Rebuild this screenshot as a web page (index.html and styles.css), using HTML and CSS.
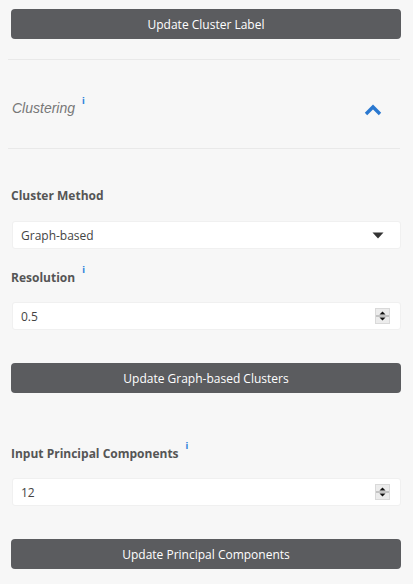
FILE: index.html
```html
<!DOCTYPE html>
<html>
<head>
<meta name="viewport" content="width=device-width, initial-scale=1">
<link rel="stylesheet" href="styles.css">
</head>
<body>

<div class="panel">

  <button class="btn btn-first">Update Cluster Label</button>

  <hr class="rule rule-top">

  <div class="section-head">
    <span class="section-title">Clustering<sup class="info">i</sup></span>
    <svg class="chevron" width="18" height="12" viewBox="0 0 18 12">
      <path d="M2 10 L9 3 L16 10" fill="none" stroke="#2a78d0" stroke-width="3.4"/>
    </svg>
  </div>

  <hr class="rule">

  <label class="field-label first-label">Cluster Method</label>
  <div class="box">
    <span>Graph-based</span>
    <svg class="caret" width="12" height="7" viewBox="0 0 12 7">
      <path d="M0.5 0.5 L11.5 0.5 L6 6.5 Z" fill="#333"/>
    </svg>
  </div>

  <label class="field-label">Resolution<sup class="info">i</sup></label>
  <div class="box">
    <span>0.5</span>
    <svg class="spin" width="15" height="16" viewBox="0 0 15 16">
      <rect x="0" y="0" width="15" height="16" fill="#d9d9d9"/>
      <rect x="1" y="1" width="13" height="14" fill="#ececec"/>
      <line x1="1" y1="8" x2="14" y2="8" stroke="#9a9a9a"/>
      <path d="M4.5 6.5 L10.5 6.5 L7.5 3.5 Z" fill="#111"/>
      <path d="M4.5 9.5 L10.5 9.5 L7.5 12.5 Z" fill="#111"/>
    </svg>
  </div>

  <button class="btn btn-mid">Update Graph-based Clusters</button>

  <label class="field-label pc-label">Input Principal Components<sup class="info">i</sup></label>
  <div class="box">
    <span>12</span>
    <svg class="spin" width="15" height="16" viewBox="0 0 15 16">
      <rect x="0" y="0" width="15" height="16" fill="#d9d9d9"/>
      <rect x="1" y="1" width="13" height="14" fill="#ececec"/>
      <line x1="1" y1="8" x2="14" y2="8" stroke="#9a9a9a"/>
      <path d="M4.5 6.5 L10.5 6.5 L7.5 3.5 Z" fill="#111"/>
      <path d="M4.5 9.5 L10.5 9.5 L7.5 12.5 Z" fill="#111"/>
    </svg>
  </div>

  <button class="btn btn-mid">Update Principal Components</button>

</div>

</body>
</html>
```

FILE: styles.css
```css
body {
    margin: 0;
    background: #f7f7f7;
    font-family: "Open Sans", "Liberation Sans", sans-serif;
}

.panel {
    padding: 9px 12px 15px 11px;
    display: flex;
    flex-direction: column;
}

.btn {
    display: block;
    width: 100%;
    height: 30px;
    border: 0;
    border-radius: 4px;
    background: #5b5c5f;
    color: #fff;
    font-family: "Open Sans", "Liberation Sans", sans-serif;
    font-size: 12px;
    padding: 0;
}

.btn-mid {
    margin-top: 33px;
}

.rule {
    border: 0;
    border-top: 1px solid #e9e9e9;
    margin: 0 1px 0 -3px;
}

.rule-top {
    margin-top: 20px;
}

.section-head {
    height: 88px;
    padding-top: 8px;
    box-sizing: border-box;
    display: flex;
    align-items: center;
    justify-content: space-between;
}

.section-title {
    font-family: "Liberation Sans", Arial, sans-serif;
    font-style: italic;
    font-size: 14px;
    color: #777;
    padding-left: 1px;
}

.chevron {
    margin-right: 19px;
    margin-top: 4px;
}

.info {
    font-family: "DejaVu Sans", sans-serif;
    font-style: normal;
    font-weight: bold;
    font-size: 8px;
    line-height: 0;
    color: #2f86dc;
    margin-left: 7px;
    vertical-align: baseline;
    position: relative;
    top: -9px;
}

.field-label {
    display: block;
    font-weight: bold;
    font-size: 12px;
    line-height: 16px;
    color: #555;
    margin-top: 21px;
    margin-bottom: 16px;
}

.first-label {
    margin-top: 39px;
    margin-bottom: 17px;
}

.pc-label {
    margin-top: 53px;
}

.box {
    height: 28px;
    box-sizing: border-box;
    margin-left: 1px;
    background: #fff;
    border: 1px solid #f0f0f0;
    border-radius: 3px;
    padding: 0 10px 0 8px;
    display: flex;
    align-items: center;
    justify-content: space-between;
    font-size: 12px;
    color: #444;
}

.caret {
    margin-right: 6px;
}
```
